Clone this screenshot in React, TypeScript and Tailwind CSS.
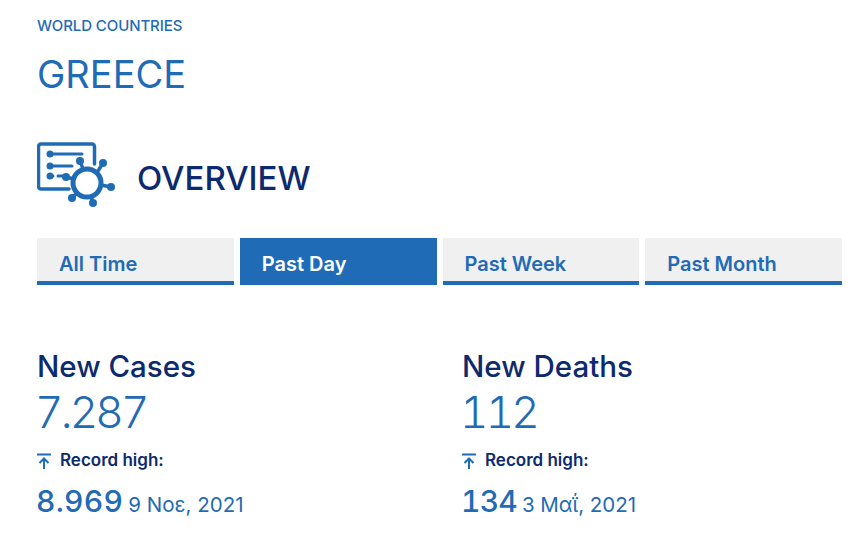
const Arrow = () => (
  <svg width="14" height="17" viewBox="0 0 14 17" fill="none" stroke="#1f6bb5" strokeWidth="2">
    <path d="M0 1.500h14M7 16V6M2.500 10 7 5.500l4.500 4.500" />
  </svg>
);

const Icon = () => (
  <svg width="78" height="66" viewBox="0 0 78 66" fill="none" stroke="#1f6bb5" strokeLinecap="round">
    <path d="M32 47H4a2.500 2.500 0 0 1-2.500-2.500V4.500A2.500 2.500 0 0 1 4 2h51a2.500 2.500 0 0 1 2.500 2.500V22" strokeWidth="3.500" />
    <path d="M13 12h32M13 24h22M13 34h3M21 34h5" strokeWidth="3" />
    <g fill="#1f6bb5" stroke="none">
      <circle cx="13" cy="12" r="3.500" />
      <circle cx="13" cy="24" r="3.500" />
      <circle cx="13" cy="34" r="3.500" />
      <circle cx="43" cy="19" r="4" />
      <circle cx="66" cy="21" r="4" />
      <circle cx="74" cy="45" r="4" />
      <circle cx="56" cy="61" r="4" />
      <circle cx="35" cy="56" r="4" />
      <circle cx="29" cy="35" r="4" />
    </g>
    <path d="M43 19l3 8M66 21l-5 8M74 45l-10-2M56 61l-2-7M35 56l5-5M29 35l8 2" strokeWidth="3.500" />
    <circle cx="50" cy="41" r="14" strokeWidth="5" />
  </svg>
);

const tabs = ["All Time", "Past Day", "Past Week", "Past Month"];

const stats = [
  { title: "New Cases", value: "7.287", high: "8.969", date: "9 Νοε, 2021", cls: "w-[425px]", highCls: "-ml-[1px] text-[30px] leading-[36px] font-medium tabular-nums tracking-[0.300px]" },
  { title: "New Deaths", value: "112", high: "134", date: "3 Μαΐ, 2021", cls: "", highCls: "-ml-[1px] text-[30px] leading-[36px] font-medium tabular-nums tracking-[-0.800px]" },
];

export default function App() {
  return (
    <div className="w-[868px] h-[538px] bg-white overflow-hidden pl-[37px] pt-[17px] font-['Inter',sans-serif]">
      <div className="text-[15px] leading-[18px] text-[#1f6bb5] font-medium tracking-[-0.1px]">WORLD COUNTRIES</div>
      <div className="mt-[16px] text-[38px] leading-[46px] text-[#1f6bb5] font-normal">GREECE</div>
      <div className="mt-[45px] flex items-center h-[66px]">
        <Icon />
        <div className="ml-[22px] mt-[5px] text-[33px] leading-[40px] text-[#0d2a6e] font-medium">OVERVIEW</div>
      </div>
      <div className="mt-[30px] flex gap-[6px] w-[805px]">
        {tabs.map((t) => (
          <div
            key={t}
            className={
              t === "Past Day"
                ? "w-[197px] h-[47px] pl-[22px] pt-[14px] bg-[#1f6bb5] text-white text-[20px] leading-[24px] font-semibold border-b-4 border-[#1f6bb5]"
                : "w-[197px] h-[47px] pl-[22px] pt-[14px] bg-[#f0f0f0] text-[#1f6bb5] text-[20px] leading-[24px] font-semibold border-b-4 border-[#1f6bb5]"
            }
          >
            {t}
          </div>
        ))}
      </div>
      <div className="mt-[64px] flex">
        {stats.map((s) => (
          <div key={s.title} className={s.cls}>
            <div className="text-[29.500px] leading-[34px] text-[#0d2a6e] font-medium">{s.title}</div>
            <div className="mt-[4px] -ml-[2px] text-[44px] leading-[50px] text-[#1f6bb5] font-light tabular-nums tracking-[-2.800px]">{s.value}</div>
            <div className="mt-[12px] flex items-center gap-[9px] h-[24px]">
              <Arrow />
              <span className="text-[17px] text-[#0d2a6e] font-semibold">Record high:</span>
            </div>
            <div className="mt-[10px] flex items-baseline gap-[5px] text-[#1f6bb5]">
              <span className={s.highCls}>{s.high}</span>
              <span className="text-[20.500px] leading-[36px] font-normal">{s.date}</span>
            </div>
          </div>
        ))}
      </div>
    </div>
  );
}
